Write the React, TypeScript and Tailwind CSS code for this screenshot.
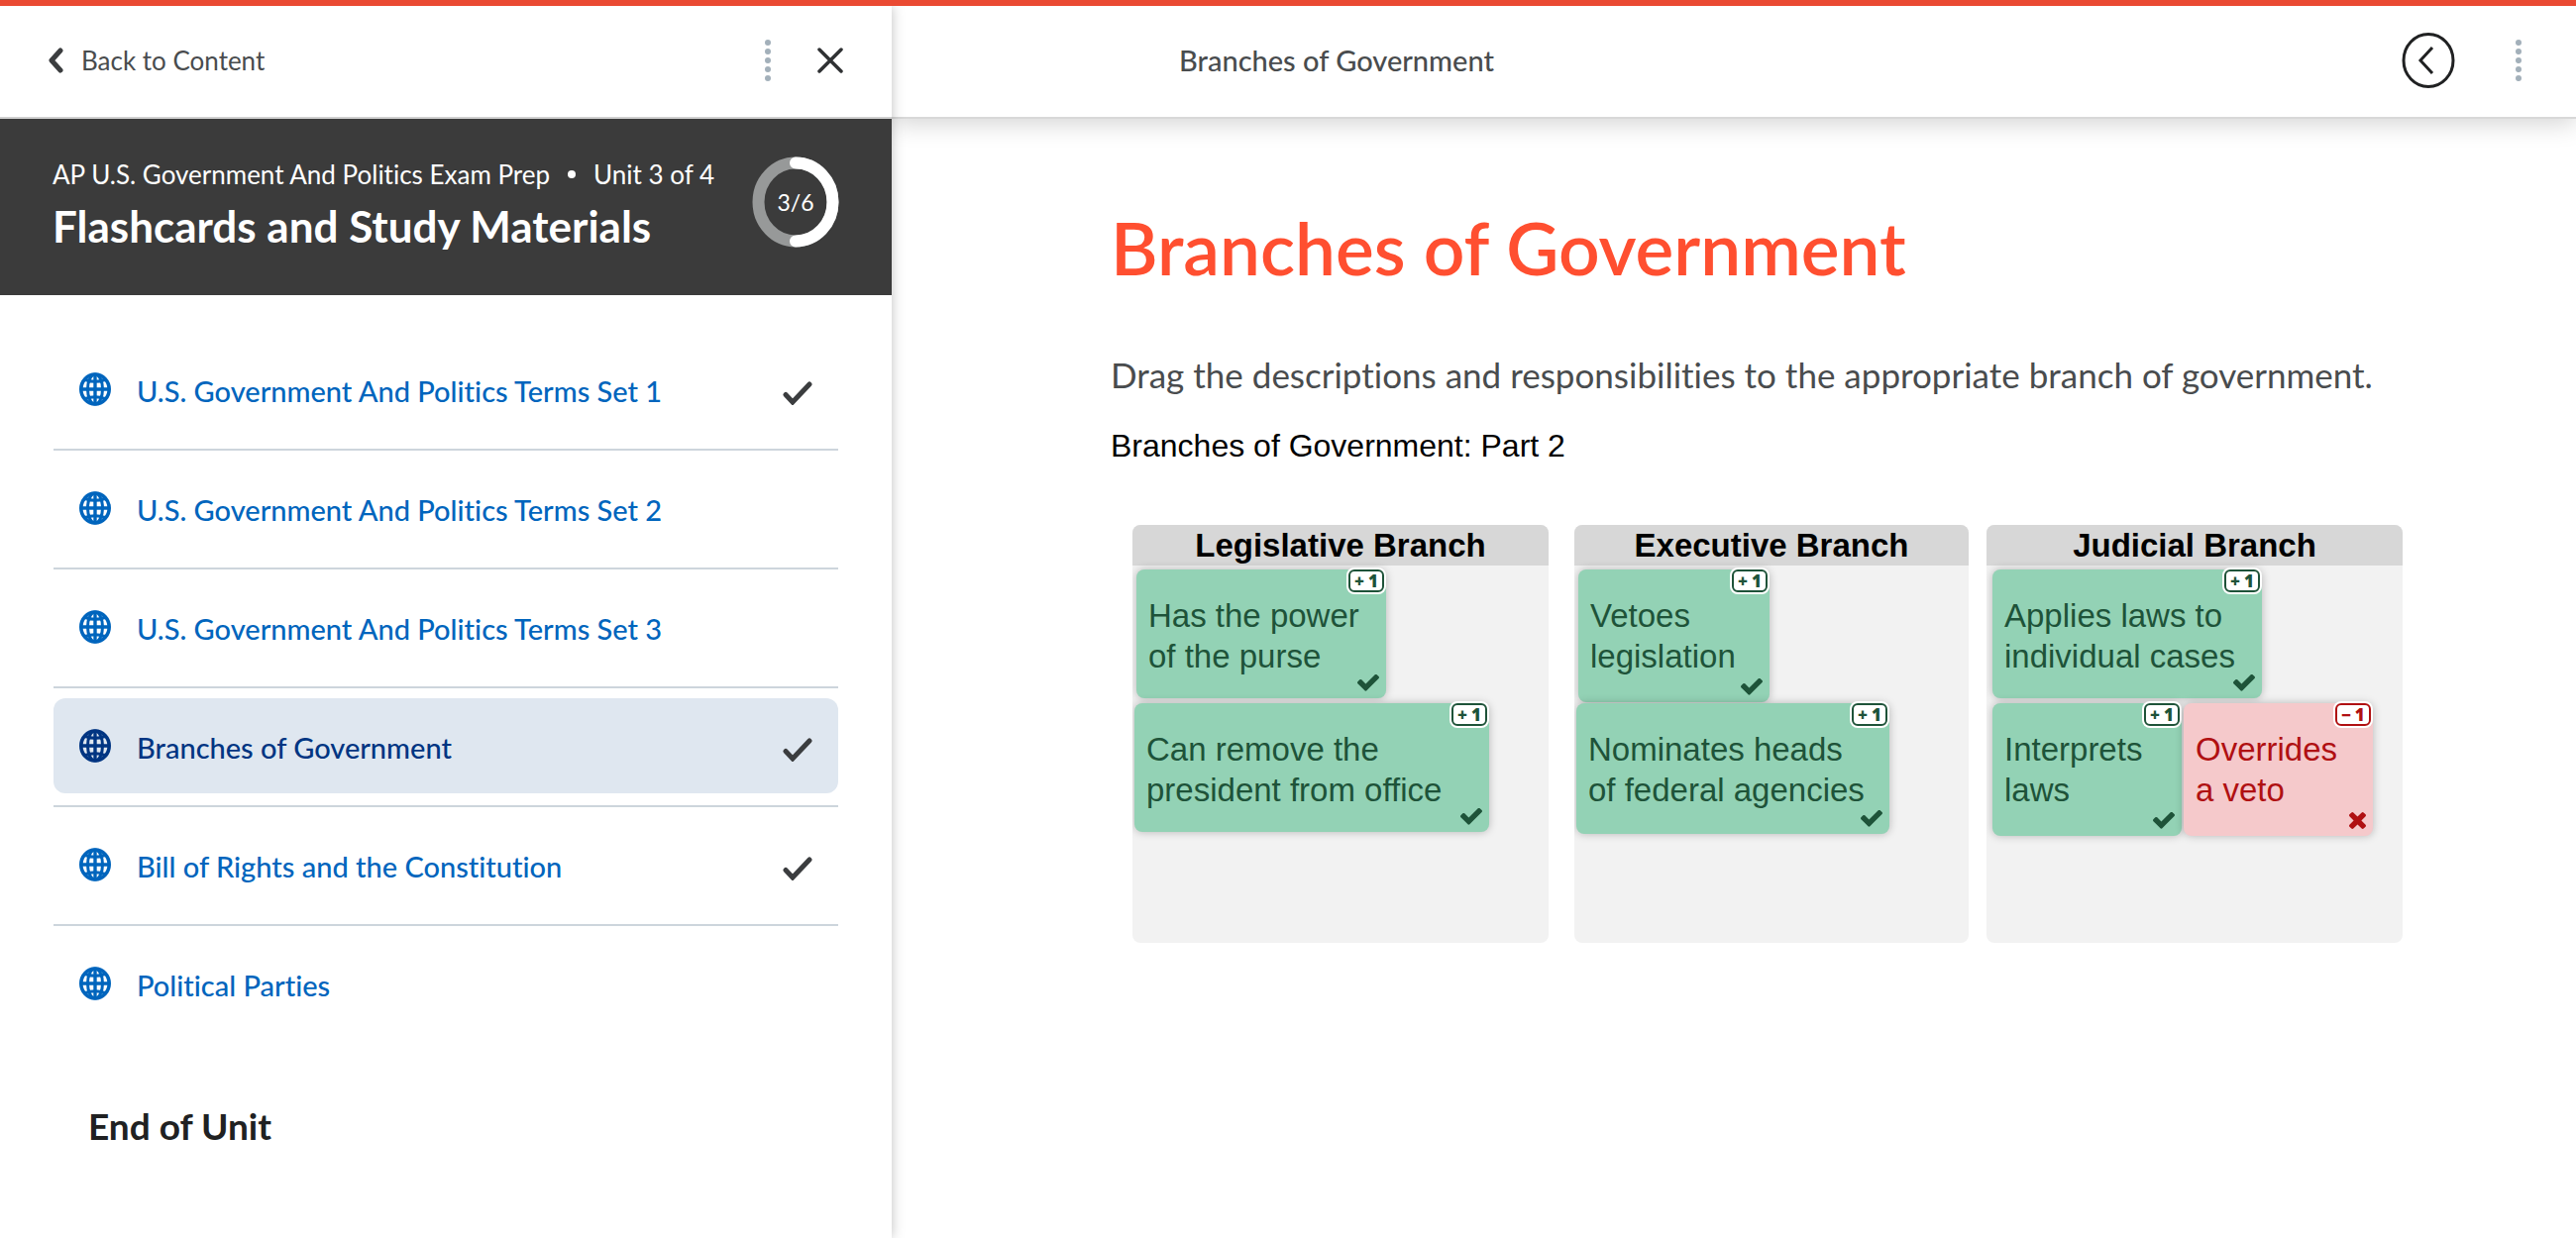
import React from 'react';

interface Unit {
  title: string;
  done?: boolean;
  current?: boolean;
}

interface CardProps {
  lines: string[];
  size: string;
  wrong?: boolean;
}

interface ZoneProps {
  title: string;
  className: string;
  children: React.ReactNode;
}

const units: Unit[] = [
  { title: 'U.S. Government And Politics Terms Set 1', done: true },
  { title: 'U.S. Government And Politics Terms Set 2' },
  { title: 'U.S. Government And Politics Terms Set 3' },
  { title: 'Branches of Government', done: true, current: true },
  { title: 'Bill of Rights and the Constitution', done: true },
  { title: 'Political Parties' },
];

const GlobeIcon = () => (
  <svg viewBox="0 0 32 34" className="h-[34px] w-8 shrink-0" fill="none" stroke="currentColor" strokeWidth="3">
    <ellipse cx="16" cy="17" rx="14.2" ry="15" strokeWidth="3.6" />
    <ellipse cx="16" cy="17" rx="7.5" ry="15" />
    <path d="M16 1.5v31M1.5 17h29" strokeWidth="3.4" />
    <path d="M6 7.5q10 3.5 20 0M6 26.5q10-3.5 20 0" />
  </svg>
);

const DoneIcon = () => (
  <svg viewBox="0 0 30 24" className="h-6 w-[30px]" fill="none" stroke="#3b3d3f" strokeWidth="5" strokeLinecap="round">
    <path d="M3 13.5l7 7.5L27 3" />
  </svg>
);

const DotsDivider = () => (
  <svg viewBox="0 0 8 44" className="h-11 w-2" fill="#a3b0ba" aria-hidden="true">
    <circle cx="4" cy="4" r="3" />
    <circle cx="4" cy="13" r="3" />
    <circle cx="4" cy="22" r="3" />
    <circle cx="4" cy="31" r="3" />
    <circle cx="4" cy="40" r="3" />
  </svg>
);

const Card: React.FC<CardProps> = ({ lines, size, wrong }) => (
  <div
    className={`relative rounded-lg px-3 pt-[26px] text-[33px] leading-[41px] whitespace-nowrap shadow-[0_0_8px_rgba(0,0,0,0.25)] ${size} ${
      wrong ? 'bg-[#f5c9cb] text-[#b01012]' : 'bg-[#93d2b5] text-[#1e5339]'
    }`}
  >
    {lines.map((line) => (
      <p key={line}>{line}</p>
    ))}
    <span className="absolute -top-0.5 right-0 rounded-lg bg-white p-0.5">
      <span className="flex h-[23px] w-9 items-center justify-center gap-1 rounded-md border-2 border-current font-['Open_Sans'] text-[17px] leading-none font-extrabold">
        <span>{wrong ? '−' : '+'}</span>
        <span>1</span>
      </span>
    </span>
    {wrong ? (
      <svg viewBox="302 366 1188 1188" className="absolute right-[7px] bottom-[7px] h-[17px] w-[17px]" fill="currentColor">
        <path d="M1490 1322q0 40-28 68l-136 136q-28 28-68 28t-68-28l-294-294-294 294q-28 28-68 28t-68-28l-136-136q-28-28-28-68t28-68l294-294-294-294q-28-28-28-68t28-68l136-136q28-28 68-28t68 28l294 294 294-294q28-28 68-28t68 28l136 136q28 28 28 68t-28 68l-294 294 294 294q28 28 28 68z" />
      </svg>
    ) : (
      <svg viewBox="121 374 1550 1148" className="absolute right-[7px] bottom-[7px] h-[17px] w-[22px]" fill="currentColor">
        <path d="M1671 566q0 40-28 68l-724 724-136 136q-28 28-68 28t-68-28l-136-136-362-362q-28-28-28-68t28-68l136-136q28-28 68-28t68 28l294 295 656-657q28-28 68-28t68 28l136 136q28 28 28 68z" />
      </svg>
    )}
  </div>
);

const DropZone: React.FC<ZoneProps> = ({ title, className, children }) => (
  <section className={`overflow-hidden rounded-lg bg-[#f2f2f2] ${className}`}>
    <h3 className="bg-[#d7d7d7] text-center text-[33px] leading-[41px] font-bold">{title}</h3>
    <div className="grid h-[381px] auto-rows-[135px] pt-1">{children}</div>
  </section>
);

const Sidebar = () => (
  <aside className="relative z-10 w-[900px] shrink-0 bg-white shadow-[0_0_12px_rgba(0,0,0,0.25)]">
    <div className="flex h-[114px] items-center border-b-2 border-[#d0d0d0] pr-[49px] pb-0.5 pl-12">
      <a href="#content" className="flex items-center gap-[18px] text-[26px] text-[#494c4e]">
        <svg viewBox="0 0 16 26" className="h-[26px] w-4" fill="none" stroke="#3b3d3f" strokeWidth="5" strokeLinecap="round" strokeLinejoin="round">
          <path d="M13 3L4 13l9 10" />
        </svg>
        Back to Content
      </a>
      <div className="ml-auto flex items-center gap-[46px]">
        <DotsDivider />
        <button type="button" aria-label="Close">
          <svg viewBox="0 0 26 26" className="h-[26px] w-[26px]" fill="none" stroke="#2f3133" strokeWidth="3.5" strokeLinecap="round">
            <path d="M2 2l22 22M24 2L2 24" />
          </svg>
        </button>
      </div>
    </div>

    <header className="flex h-[178px] items-start justify-between bg-[#3b3b3b] px-[53px] pt-[38px] text-white">
      <div>
        <p className="flex items-center gap-[18px] text-[26px] leading-9">
          <span>AP U.S. Government And Politics Exam Prep</span>
          <span className="h-2 w-2 rounded-full bg-white" />
          <span>Unit 3 of 4</span>
        </p>
        <h2 className="mt-1 text-[44px] leading-[60px] font-bold">Flashcards and Study Materials</h2>
      </div>
      <div className="relative">
        <svg viewBox="0 0 88 92" className="h-[92px] w-[88px]" fill="none" strokeWidth="12">
          <ellipse cx="44" cy="46" rx="37.5" ry="39.5" stroke="#979999" />
          <path d="M44 6.5A37.5 39.5 0 0 1 44 85.5" stroke="#fff" strokeLinecap="round" />
        </svg>
        <span className="absolute inset-0 flex items-center justify-center text-[23px]">3/6</span>
      </div>
    </header>

    <ul className="px-[54px] pt-[37px]">
      {units.map((unit) => (
        <li key={unit.title} className="h-[120px] border-b-2 border-[#cdd5dc] py-2.5 last:border-0">
          <a
            href="#unit"
            className={`flex h-24 items-center rounded-xl px-[26px] text-[29px] font-medium ${
              unit.current ? 'bg-[#dfe7f0] text-[#003582]' : 'text-[#0065bd]'
            }`}
          >
            <GlobeIcon />
            <span className="ml-[26px] pt-1">{unit.title}</span>
            {unit.done && (
              <span className="ml-auto pt-2">
                <DoneIcon />
              </span>
            )}
          </a>
        </li>
      ))}
    </ul>

    <h2 className="mt-[56px] px-[89px] text-[37px] leading-[52px] font-bold text-[#202122]">End of Unit</h2>
  </aside>
);

const App: React.FC = () => (
  <div className="flex min-h-screen flex-col overflow-hidden border-t-[6px] border-[#ea4a32] bg-white font-['Lato',sans-serif] [font-variant-ligatures:none]">
    <div className="flex grow">
      <Sidebar />
      <main className="min-w-0 grow">
        <div className="flex h-[114px] items-center border-b-2 border-[#d8d8d8] pr-[54px] pb-0.5 pl-[290px] text-[29px] font-medium text-[#494c4e] shadow-[0_4px_24px_rgba(0,0,0,0.18)]">
          <span>Branches of Government</span>
          <div className="ml-auto flex items-center gap-[60px]">
            <button type="button" aria-label="Previous">
              <svg viewBox="0 0 54 56" className="h-14 w-[54px]" fill="none" stroke="#202122" strokeWidth="3">
                <ellipse cx="27" cy="28" rx="25" ry="26.5" />
                <path d="M31 15L19 28l12 13" />
              </svg>
            </button>
            <DotsDivider />
          </div>
        </div>

        <article className="pt-[78px] pr-[175px] pl-[221px]">
          <h1 className="text-[73px] leading-[104px] font-semibold text-[#ff4f30]">Branches of Government</h1>
          <p className="mt-[50px] text-[35px] leading-[52px] text-[#494c4e]">
            Drag the descriptions and responsibilities to the appropriate branch of government.
          </p>

          <div className="mt-6 font-['Liberation_Sans',Arial,sans-serif] text-black">
            <p className="text-[32px] leading-[44px]">Branches of Government: Part 2</p>
            <div className="mt-[58px] ml-[22px] flex gap-[18px]">
              <DropZone title="Legislative Branch" className="flex-[420]">
                <Card lines={['Has the power', 'of the purse']} size="ml-1 w-[252px] h-[130px]" />
                <Card lines={['Can remove the', 'president from office']} size="ml-0.5 w-[358px] h-[130px]" />
              </DropZone>
              <DropZone title="Executive Branch" className="ml-2 flex-[398]">
                <Card lines={['Vetoes', 'legislation']} size="ml-1 w-[193px] h-[134px]" />
                <Card lines={['Nominates heads', 'of federal agencies']} size="ml-0.5 w-[316px] h-[132px]" />
              </DropZone>
              <DropZone title="Judicial Branch" className="flex-[420]">
                <Card lines={['Applies laws to', 'individual cases']} size="ml-1.5 w-[272px] h-[130px]" />
                <div className="ml-1.5 flex gap-0.5">
                  <Card lines={['Interprets', 'laws']} size="w-[191px] h-[134px]" />
                  <Card lines={['Overrides', 'a veto']} size="w-[191px] h-[134px]" wrong />
                </div>
              </DropZone>
            </div>
          </div>
        </article>
      </main>
    </div>
  </div>
);

export default App;
